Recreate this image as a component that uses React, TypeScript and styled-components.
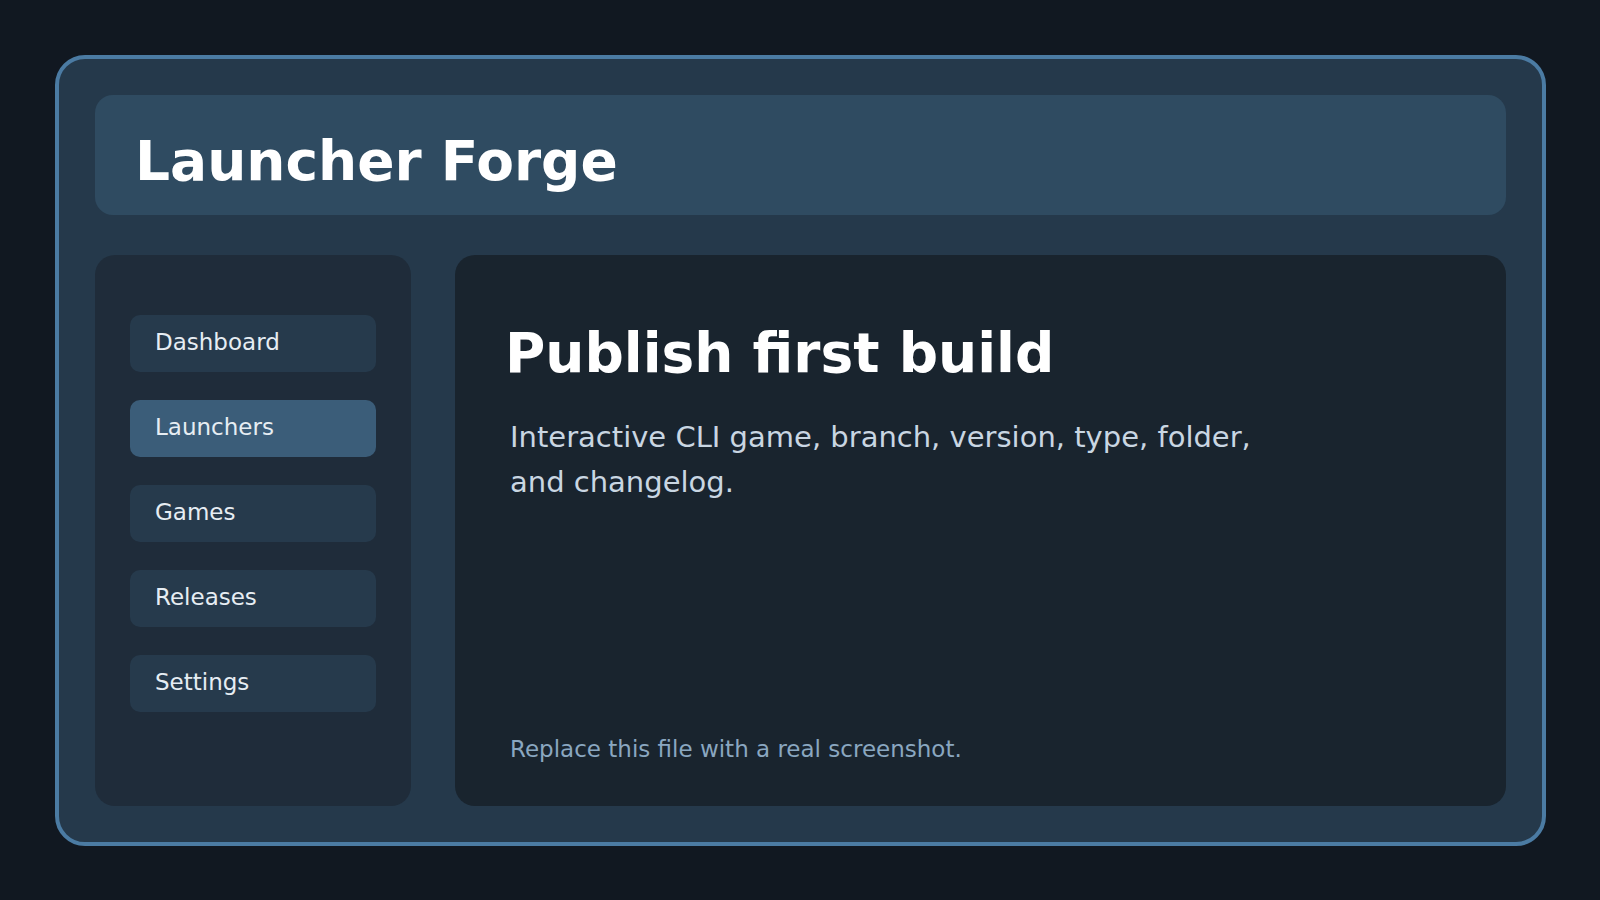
import React from "react";
import styled, { createGlobalStyle } from "styled-components";

const GlobalStyle = createGlobalStyle`
  html, body {
    margin: 0;
    padding: 0;
    background: #111821;
    font-family: "DejaVu Sans", "Noto Sans", sans-serif;
  }
  * { box-sizing: border-box; }
`;

const Frame = styled.div`
  margin: 55px 54px 54px 55px;
  height: 791px;
  border: 4px solid #4b7ba3;
  border-radius: 30px;
  background: #25394b;
  padding: 36px;
  display: grid;
  grid-template-rows: 120px 1fr;
  grid-template-columns: 316px 1fr;
  row-gap: 40px;
  column-gap: 44px;
`;

const Header = styled.header`
  grid-column: 1 / -1;
  background: #2f4b61;
  border-radius: 18px;
  display: flex;
  align-items: center;
  padding: 12px 40px 0;
`;

const Brand = styled.h1`
  margin: 0;
  font-size: 55px;
  line-height: 1.2;
  font-weight: 700;
  color: #ffffff;
`;

const Sidebar = styled.nav`
  background: #1f2c3a;
  border-radius: 20px;
  padding: 60px 35px;
  display: flex;
  flex-direction: column;
  gap: 28px;
`;

const NavItem = styled.div<{ $active?: boolean }>`
  height: 57px;
  border-radius: 10px;
  background: ${(p) => (p.$active ? "#3b5d79" : "#263a4c")};
  color: #e6edf3;
  font-size: 23px;
  display: flex;
  align-items: center;
  padding: 0 0 3px 25px;
`;

const Main = styled.main`
  background: #19242e;
  border-radius: 20px;
  padding: 65px 50px 41px;
  display: flex;
  flex-direction: column;
`;

const Title = styled.h2`
  margin: 0;
  font-size: 55px;
  line-height: 1.2;
  font-weight: 700;
  color: #ffffff;
`;

const Description = styled.p`
  margin: 29px 0 0 5px;
  max-width: 780px;
  font-size: 29px;
  line-height: 45px;
  color: #c9d6e2;
`;

const Note = styled.p`
  margin: auto 0 0 5px;
  font-size: 23px;
  line-height: 1.3;
  color: #8aa7c0;
`;

const navItems = ["Dashboard", "Launchers", "Games", "Releases", "Settings"];

export default function App() {
  return (
    <>
      <GlobalStyle />
      <Frame>
        <Header>
          <Brand>Launcher Forge</Brand>
        </Header>
        <Sidebar>
          {navItems.map((item) => (
            <NavItem key={item} $active={item === "Launchers"}>
              {item}
            </NavItem>
          ))}
        </Sidebar>
        <Main>
          <Title>Publish first build</Title>
          <Description>
            Interactive CLI game, branch, version, type, folder, and changelog.
          </Description>
          <Note>Replace this file with a real screenshot.</Note>
        </Main>
      </Frame>
    </>
  );
}
